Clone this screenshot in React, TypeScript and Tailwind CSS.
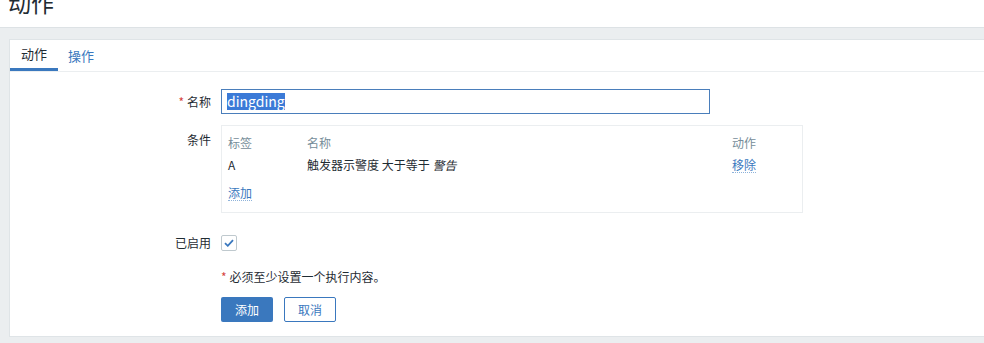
import React from 'react';

const font = { fontFamily: '"Noto Sans CJK SC", "Noto Sans", sans-serif' };

export default function App() {
  return (
    <div className="w-full h-[343px] bg-[#ebeef0] overflow-hidden text-[12px] text-[#1f2c33]" style={font}>
      <div className="h-[28px] bg-white border-b border-[#dde2e5] overflow-hidden">
        <h1 className="ml-[8px] mt-[-14px] text-[23px] leading-[32px] font-normal text-[#1f2c33]">动作</h1>
      </div>

      <div className="pl-[9px] pt-[11px]">
        <div className="bg-white border-l border-t border-b border-[#dfe4e7] h-[298px]">
          <div className="flex h-[32px] border-b border-[#ebeef0]">
            <div className="w-[48px] flex items-center justify-center border-b-[3px] border-[#3a78be] text-[13px] text-[#1f2c33]">动作</div>
            <div className="ml-[10px] flex items-center text-[13px] text-[#3a78be]">操作</div>
          </div>

          <div className="pt-[17px]">
            <div className="flex items-center">
              <div className="w-[201px] text-right">
                <span className="text-[#d64541] mr-[3px]">*</span>名称
              </div>
              <div className="ml-[10px] w-[489px] h-[25px] border border-[#4a7ebb] flex items-center px-[5px]">
                <span className="bg-[#3b7ad7] text-white text-[14px] leading-[17px]">dingding</span>
              </div>
            </div>

            <div className="flex mt-[11px]">
              <div className="w-[201px] text-right pt-[6px]">条件</div>
              <div className="ml-[10px] w-[582px] h-[88px] border border-[#ebeef0] px-[6px] pt-[6px]">
                <div className="grid grid-cols-[79px_1fr_64px] h-[22px] items-center text-[#768d99]">
                  <span>标签</span>
                  <span>名称</span>
                  <span>动作</span>
                </div>
                <div className="grid grid-cols-[79px_1fr_64px] h-[22px] items-center">
                  <span>A</span>
                  <span>触发器示警度 大于等于 <i>警告</i></span>
                  <span className="text-[#3a78be] border-b border-dotted border-[#8fb3da] w-fit leading-[15px]">移除</span>
                </div>
                <div className="pt-[8px]">
                  <span className="text-[#3a78be] border-b border-dotted border-[#8fb3da] leading-[15px] inline-block">添加</span>
                </div>
              </div>
            </div>

            <div className="flex items-center mt-[21px]">
              <div className="w-[201px] text-right">已启用</div>
              <div className="ml-[10px] w-[16px] h-[16px] border border-[#bfc9ce] rounded-[2px] flex items-center justify-center">
                <svg width="10" height="8" viewBox="0 0 10 8">
                  <path d="M1 4.2 L3.8 6.8 L9 1.2" fill="none" stroke="#3a78be" strokeWidth="1.8" />
                </svg>
              </div>
            </div>

            <div className="ml-[211px] mt-[17px] leading-[16px]">
              <span className="text-[#d64541] mr-[3px]">*</span>必须至少设置一个执行内容。
            </div>

            <div className="ml-[211px] mt-[12px] flex gap-[11px]">
              <button className="w-[52px] h-[25px] bg-[#3a78be] text-white rounded-[2px]">添加</button>
              <button className="w-[52px] h-[25px] bg-white border border-[#3a78be] text-[#3a78be] rounded-[2px]">取消</button>
            </div>
          </div>
        </div>
      </div>
    </div>
  );
}
